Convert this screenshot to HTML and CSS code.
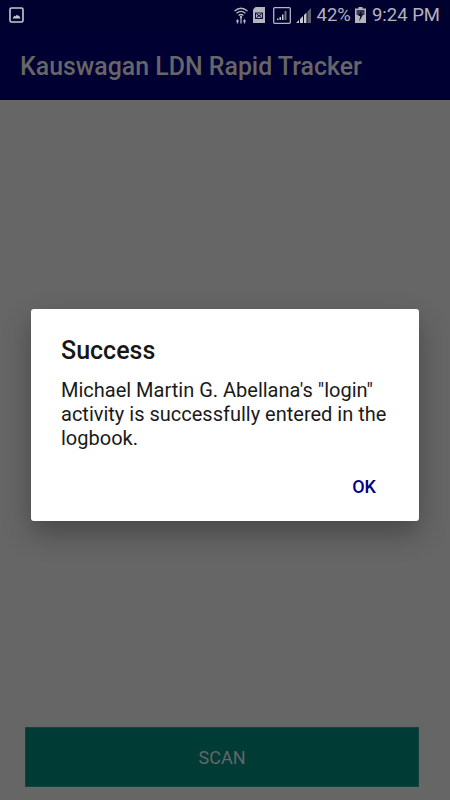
FILE: index.html
```html
<html lang="en">
  <head>
    <meta charset="UTF-8" />
    <meta name="viewport" content="width=device-width, initial-scale=1.0" />
    <title>Kauswagan LDN Rapid Tracker</title>
    <link rel="stylesheet" href="styles.css">
  </head>
  <body>
    <div class="status-bar">
      <svg class="icon-picture" width="15" height="16" viewBox="0 0 15 16">
        <rect x="1" y="1" width="13" height="14" rx="1.5" fill="none" stroke="#c8c8d0" stroke-width="1.6"/>
        <path d="M3.5 11.5 L5.5 8.5 L6.5 9.5 L8 7.5 L9 9 L10 8.5 L11.5 11.5 Z" fill="#c8c8d0"/>
      </svg>
      <div class="status-right">
        <svg class="icon-wifi" width="14" height="17" viewBox="0 0 14 17">
          <g fill="none" stroke="#b4b4bc" stroke-width="1.3">
            <path d="M0.5 4 Q7 -1.5 13.5 4"/>
            <path d="M2.5 6.3 Q7 2.5 11.5 6.3"/>
            <path d="M4.6 8.5 Q7 6.5 9.4 8.5"/>
          </g>
          <circle cx="7" cy="10" r="1.2" fill="#b4b4bc"/>
          <path d="M7 11 V16.5 M3.5 13 V16.5 M10.5 13 V16.5" stroke="#b4b4bc" stroke-width="1.3"/>
          <path d="M1.8 14.5 L3.5 12 L5.2 14.5 Z M8.8 14.5 L10.5 12 L12.2 14.5 Z" fill="#b4b4bc"/>
        </svg>
        <svg class="icon-sim" width="12" height="16" viewBox="0 0 12 16">
          <path d="M2.5 0 H12 V16 H0 V2.5 Z" fill="#b4b4bc"/>
          <rect x="2.5" y="6" width="7" height="5.5" fill="none" stroke="#01012f" stroke-width="0.9"/>
          <path d="M3.5 7 L8.5 10.5 M8.5 7 L3.5 10.5" stroke="#01012f" stroke-width="1"/>
        </svg>
        <svg class="icon-signal-box" width="18" height="17" viewBox="0 0 18 17">
          <rect x="0.7" y="0.7" width="16.6" height="15.6" rx="1" fill="none" stroke="#b4b4bc" stroke-width="1.3"/>
          <path d="M4 13 h1.5 v-1.5 h-1.5 Z M6.5 13 h1.5 v-3 h-1.5 Z M9 13 h1.5 v-5.5 h-1.5 Z" fill="#d0d0d8"/>
          <path d="M11.5 13 h2 v-9 h-2 Z" fill="#70707c"/>
        </svg>
        <svg class="icon-signal" width="15" height="15" viewBox="0 0 15 15">
          <path d="M0 15 L3 12 V15 Z M4 15 V11 L7 8 V15 Z M8 15 V7 L10.5 4.5 V15 Z" fill="#c8c8d0"/>
          <path d="M11.5 15 V3.5 L15 0 V15 Z" fill="#60606c"/>
        </svg>
        <span class="battery-pct">42%</span>
        <svg class="icon-battery" width="11" height="16" viewBox="0 0 11 16">
          <path d="M3.5 0 H7.5 V1.5 H11 V16 H0 V1.5 H3.5 Z" fill="#b4b4bc"/>
          <path d="M1.5 3 H9.5 V8 H1.5 Z" fill="#3a3a50"/>
          <path d="M6.8 3 L3.2 9 H5.3 L4.2 14.5 L8 7.5 H5.8 Z" fill="#01012f"/>
        </svg>
        <span class="clock">9:24 PM</span>
      </div>
    </div>
    <div class="app-bar">Kauswagan LDN Rapid Tracker</div>
    <div class="content">
      <div class="dialog">
        <div class="dialog-title">Success</div>
        <div class="dialog-msg">Michael Martin G. Abellana's "login" activity is successfully entered in the logbook.</div>
        <div class="dialog-actions"><span class="ok">OK</span></div>
      </div>
    </div>
    <div class="footer">
      <div class="scan center">SCAN</div>
    </div>
  </body>
</html>
```
FILE: styles.css
```css
*,
*::after,
*::before {
  margin: 0;
  padding: 0;
  box-sizing: border-box;
}

body {
  width: 450px;
  height: 800px;
  display: flex;
  flex-direction: column;
  overflow: hidden;
  background-color: #666666;
  font-family: Roboto, sans-serif;
}

.center {
  display: flex;
  justify-content: center;
  align-items: center;
}

.status-bar {
  height: 30px;
  padding: 0 10px 0 9px;
  display: flex;
  justify-content: space-between;
  align-items: center;
  background-color: #01012f;
  color: #b4b4bc;
}

.status-right {
  display: flex;
  align-items: center;
}

.icon-wifi {
  margin-right: 5px;
}

.icon-sim {
  margin-right: 8px;
}

.icon-signal-box {
  margin-right: 5px;
}

.icon-signal {
  margin-right: 6px;
}

.battery-pct {
  font-size: 18.5px;
  margin-right: 4px;
}

.icon-battery {
  margin-right: 6px;
}

.clock {
  font-size: 18.5px;
}

.app-bar {
  height: 70px;
  padding: 2px 0 0 20px;
  display: flex;
  align-items: center;
  background-color: #010033;
  color: #666666;
  font-size: 24.9px;
  font-weight: 500;
}

.content {
  flex: 1;
  display: flex;
  justify-content: center;
  padding: 209px 31px 0;
}

.dialog {
  width: 388px;
  height: 212px;
  background-color: white;
  border-radius: 3px;
  padding: 25px 30px 0;
  box-shadow: 0 12px 28px rgba(0, 0, 0, 0.3);
}

.dialog-title {
  font-size: 25px;
  font-weight: 500;
  line-height: 34px;
  color: #161616;
}

.dialog-msg {
  margin-top: 10px;
  font-size: 20px;
  line-height: 24px;
  color: #1a1a1a;
}

.dialog-actions {
  margin-top: 26px;
  padding-right: 13px;
  display: flex;
  justify-content: flex-end;
}

.ok {
  font-size: 18px;
  font-weight: 500;
  color: #000080;
}

.footer {
  padding: 0 31px 13px 25px;
}

.scan {
  height: 60px;
  background-color: #003b36;
  border: 1px solid #124440;
  color: #666666;
  font-size: 18px;
}
```
